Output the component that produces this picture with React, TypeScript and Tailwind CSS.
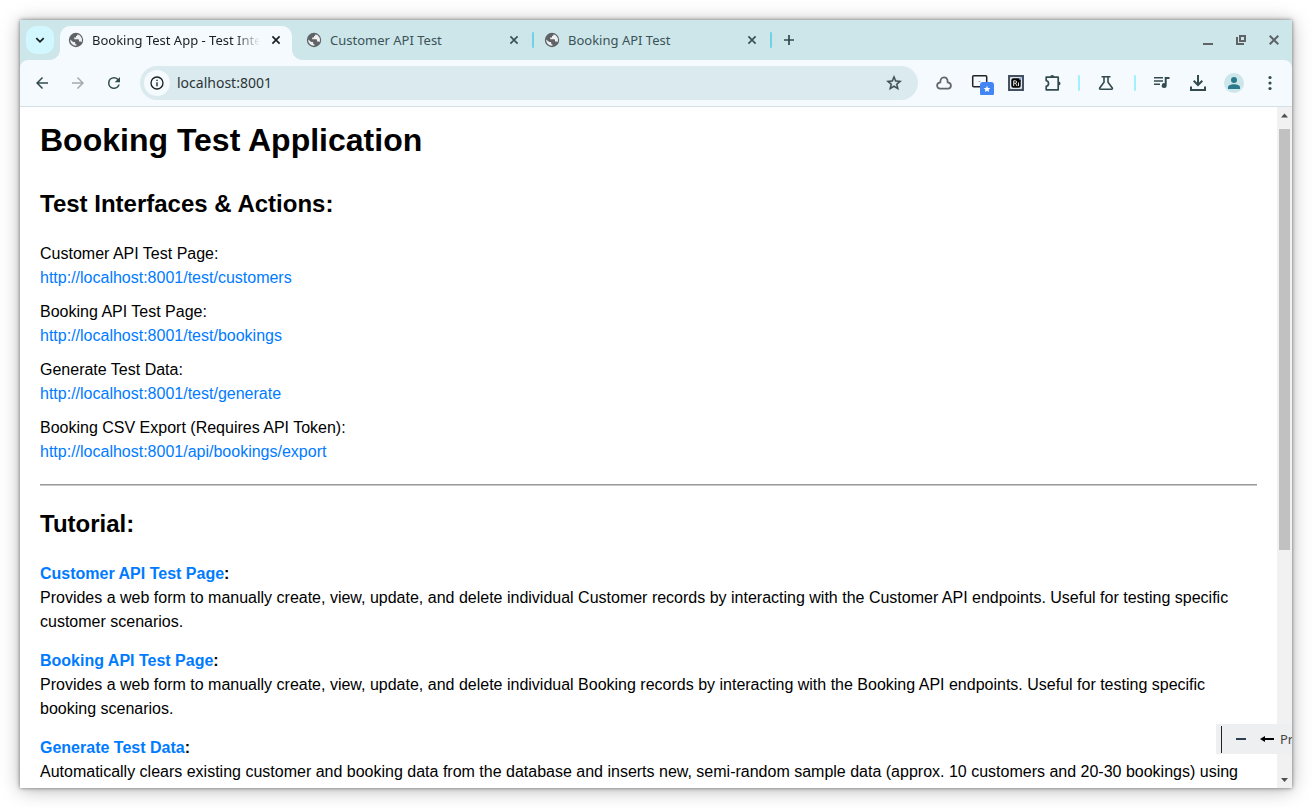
import type { ReactNode } from "react";

function Icon({ size = 20, box = "0 0 24 24", children }: { size?: number; box?: string; children: ReactNode }) {
  return (
    <svg width={size} height={size} viewBox={box} fill="currentColor" aria-hidden="true" className="shrink-0">
      {children}
    </svg>
  );
}

function Globe() {
  return (
    <svg width="16" height="16" viewBox="0 0 16 16" aria-hidden="true" className="shrink-0">
      <circle cx="8" cy="8" r="7.2" fill="#5f6368" />
      <path
        d="M9.3 2.2c.4 1-.2 1.8-1.3 1.9v1.5H6.2v1.7h3.6c.8 0 1.2.5 1.2 1.2v1h1.4c.5 0 .9.3 1.1.7A5.8 5.8 0 0 0 9.3 2.2ZM2.2 7.4A5.8 5.8 0 0 0 8.4 13.8v-1.6c-.8 0-1.3-.5-1.3-1.3v-.8H5.2L2.2 7.4Z"
        fill="#fff"
        fillOpacity=".9"
      />
    </svg>
  );
}

function CloseGlyph() {
  return (
    <svg width="10" height="10" viewBox="0 0 10 10" stroke="currentColor" strokeWidth="1.7" aria-hidden="true">
      <path d="M1.400 1.400l7.200 7.200M8.600 1.400L1.400 8.600" />
    </svg>
  );
}

function Tab({ title, active = false }: { title: string; active?: boolean }) {
  return (
    <div
      className={
        active
          ? "relative flex w-58 items-center rounded-t-[10px] bg-[#f4fafd] pr-2 pl-2 text-[#1b1f20]"
          : "flex w-58 items-center pr-2 pl-2 text-[#3b5357]"
      }
    >
      {active && (
        <>
          <span className="absolute bottom-0 -left-2.5 size-2.5 bg-[radial-gradient(circle_at_0_0,transparent_9.5px,#f4fafd_10px)]" />
          <span className="absolute -right-2.5 bottom-0 size-2.5 bg-[radial-gradient(circle_at_100%_0,transparent_9.5px,#f4fafd_10px)]" />
        </>
      )}
      <button type="button" className="flex min-w-0 flex-1 items-center gap-2 pb-1.5">
        <Globe />
        <span
          className={
            active
              ? "flex-1 overflow-hidden mask-r-from-85% text-left text-[13px] leading-5 whitespace-nowrap"
              : "flex-1 overflow-hidden text-left text-[13px] leading-5 whitespace-nowrap"
          }
        >
          {title}
        </span>
      </button>
      <button type="button" aria-label={"Close " + title} className="mb-1.5 ml-2 flex size-4 items-center justify-center">
        <CloseGlyph />
      </button>
    </div>
  );
}

function TabStrip() {
  return (
    <div className="flex h-10 shrink-0 items-stretch bg-[#cde6ea] pt-1.5 pr-2">
      <button
        type="button"
        aria-label="Search tabs"
        className="mr-1.5 ml-1.5 flex size-7 items-center justify-center rounded-[10px] bg-[#d2f7ff] text-[#1b1f20]"
      >
        <svg width="10" height="10" viewBox="0 0 10 10" fill="none" stroke="currentColor" strokeWidth="1.8">
          <path d="M1.300 3.200L5 6.800l3.700-3.600" />
        </svg>
      </button>
      <Tab title="Booking Test App - Test Interface" active />
      <div className="w-1.5" />
      <Tab title="Customer API Test" />
      <div className="mx-0.5 mt-1.5 h-4 w-0.5 rounded-full bg-[#6fd3e6]" />
      <Tab title="Booking API Test" />
      <div className="mx-0.5 mt-1.5 h-4 w-0.5 rounded-full bg-[#6fd3e6]" />
      <button type="button" aria-label="New tab" className="flex size-7 items-center justify-center pl-0.5 text-[#33494d]">
        <svg width="10" height="10" viewBox="0 0 10 10" stroke="currentColor" strokeWidth="1.700">
          <path d="M5 0v10M0 5h10" />
        </svg>
      </button>
      <div className="ml-auto flex h-7 items-center gap-[13px] text-[#5f6368]">
        <button type="button" aria-label="Minimize" className="flex size-5 items-center justify-center">
          <svg width="10" height="10" viewBox="0 0 10 10">
            <path d="M0 8h10v2H0z" fill="currentColor" />
          </svg>
        </button>
        <button type="button" aria-label="Restore" className="flex size-5 items-center justify-center">
          <svg width="10" height="10" viewBox="0 0 10 10" fill="none" stroke="currentColor" strokeWidth="2">
            <path d="M4 1h5v5H4zM1 2v7h7" />
          </svg>
        </button>
        <button type="button" aria-label="Close window" className="flex size-5 items-center justify-center">
          <svg width="10" height="10" viewBox="0 0 10 10" stroke="currentColor" strokeWidth="2">
            <path d="M.7.7l8.600 8.600M9.300.7L.7 9.300" />
          </svg>
        </button>
      </div>
    </div>
  );
}

function ToolButton({ label, children, muted = false }: { label: string; children: ReactNode; muted?: boolean }) {
  return (
    <button
      type="button"
      aria-label={label}
      className={
        muted
          ? "flex size-9 shrink-0 items-center justify-center text-[#a3abad]"
          : "flex size-9 shrink-0 items-center justify-center text-[#334b4f]"
      }
    >
      {children}
    </button>
  );
}

function Toolbar() {
  return (
    <div className="flex shrink-0 bg-[#cde6ea]">
      <div className="flex h-[47px] flex-1 items-center rounded-t-lg border-b border-[#d3e1e5] bg-[#f4fafd] pr-1 pl-1">
        <ToolButton label="Back">
          <Icon size={18}>
            <path d="M20 11H7.830l5.590-5.590L12 4l-8 8 8 8 1.410-1.410L7.830 13H20v-2z" />
          </Icon>
        </ToolButton>
        <ToolButton label="Forward" muted>
          <Icon size={18}>
            <path d="M4 11h12.170l-5.590-5.590L12 4l8 8-8 8-1.410-1.410L16.170 13H4v-2z" />
          </Icon>
        </ToolButton>
        <ToolButton label="Reload">
          <Icon size={18}>
            <path d="M17.650 6.350A7.960 7.960 0 0 0 12 4a8 8 0 1 0 7.730 10h-2.080A6 6 0 1 1 12 6c1.660 0 3.140.69 4.220 1.780L13 11h7V4l-2.350 2.350z" />
          </Icon>
        </ToolButton>
        <div className="ml-2 flex h-[34px] min-w-0 flex-1 items-center rounded-full bg-[#dbeaee] pr-[15px] pl-1">
          <button
            type="button"
            aria-label="Site information"
            className="flex size-[26px] shrink-0 items-center justify-center rounded-full bg-[#f4fafd] text-[#1b1f20]"
          >
            <Icon size={16}>
              <path d="M11 17h2v-6h-2v6zm1-15a10 10 0 1 0 0 20 10 10 0 0 0 0-20zm0 18a8 8 0 1 1 0-16 8 8 0 0 1 0 16zM11 9h2V7h-2v2z" />
            </Icon>
          </button>
          <input
            aria-label="Address"
            defaultValue="localhost:8001"
            className="ml-[7px] min-w-0 flex-1 bg-transparent text-sm text-[#2b3537] outline-none"
          />
          <button type="button" aria-label="Bookmark this page" className="text-[#3c4a4d]">
            <Icon size={18}>
              <path
                stroke="currentColor"
                strokeWidth=".5"
                d="M22 9.240l-7.190-.62L12 2 9.190 8.630 2 9.240l5.460 4.730L5.820 21 12 17.270 18.180 21l-1.630-7.030L22 9.240zM12 15.400l-3.760 2.270 1-4.280-3.320-2.880 4.380-.38L12 6.100l1.710 4.040 4.380.38-3.320 2.880 1 4.280L12 15.400z"
              />
            </Icon>
          </button>
        </div>
        <div className="ml-2 flex">
          <ToolButton label="Cloud extension">
            <svg width="16" height="14" viewBox="0 0 16 14" fill="none" stroke="#666" strokeWidth="1.800">
              <path d="M4.300 6.400C4.300 3.200 5.600 1.400 8 1.400s3.700 1.800 3.700 5c2 .3 3.200 1.500 3.200 3.100 0 1.900-1.300 3.100-3.100 3.100H4.200c-1.800 0-3.100-1.200-3.100-3.100 0-1.600 1.200-2.800 3.200-3.100Z" />
            </svg>
          </ToolButton>
          <ToolButton label="Capture extension">
            <svg width="24" height="24" viewBox="0 0 24 24" className="ml-1">
              <rect x="2.700" y="4.800" width="14" height="11" rx="1" fill="none" stroke="#222" strokeWidth="1.500" />
              <path d="M8.500 10.500h2" stroke="#aaa" />
              <rect x="10" y="11" width="14" height="14" rx="3" fill="#4285f4" />
              <path d="M17 14.700l.95 2.200 2.400.2-1.800 1.600.55 2.300-2.100-1.200-2.100 1.200.55-2.300-1.800-1.600 2.400-.2z" fill="#fff" />
            </svg>
          </ToolButton>
          <ToolButton label="Ri extension">
            <svg width="16" height="16" viewBox="0 0 16 16">
              <path d="M0 0h16v16H0z" fill="#465261" />
              <rect x="2" y="2" width="12" height="12" rx="1" fill="#dfe5ea" />
              <rect x="3.300" y="3.300" width="9.400" height="9.400" rx="2" fill="#050505" />
              <path d="M5.700 11V5.800h1.700c1.700 0 1.700 2.400 0 2.400H6M7.500 8.200L9 11M10.500 7.500V11" fill="none" stroke="#fff" strokeWidth=".9" />
              <path d="M11.500 4.500l2-2" stroke="#7fb4f5" strokeWidth="1.200" />
            </svg>
          </ToolButton>
          <ToolButton label="Extensions">
            <svg width="18" height="18" viewBox="0 0 18 18" className="ml-0.5">
              <path
                d="M2.200 3.200H14.200V15.800H2.200V12.300C5.300 11.800 5.300 7.200 2.200 6.700Z"
                fill="none"
                stroke="currentColor"
                strokeWidth="1.700"
                strokeLinejoin="round"
              />
              <path d="M6.200 3a2 2 0 0 1 4 0zM14.500 7.500a2 2 0 0 1 0 4z" fill="currentColor" />
            </svg>
          </ToolButton>
          <div className="mx-2 my-auto h-4 w-0.5 rounded-full bg-[#a1efff]" />
          <ToolButton label="Labs">
            <svg width="16" height="16" viewBox="0 0 16 16" fill="none" stroke="currentColor" strokeWidth="1.600">
              <path d="M3.500 1.800h9M6 2v5.200L1.700 13c-.3.600 0 1.200.7 1.200h11.200c.7 0 1-.6.7-1.200L10 7.200V2" />
            </svg>
          </ToolButton>
          <div className="mr-2 ml-2.5 my-auto h-4 w-0.5 rounded-full bg-[#a1efff]" />
        </div>
        <ToolButton label="Media controls">
          <svg width="16" height="16" viewBox="0 0 16 16" fill="currentColor">
            <path d="M0 2h9v1.600H0zM0 5.200h9v1.600H0zM0 8.400h6V10H0zM10.700 2H15.500v1.900h-2.800v6.700a2.500 2.500 0 1 1-2-2.450z" />
          </svg>
        </ToolButton>
        <ToolButton label="Downloads">
          <svg width="16" height="16" viewBox="0 0 16 16" fill="none" stroke="currentColor" strokeWidth="2">
            <path d="M8 0v9.500M3.700 5.700L8 10l4.300-4.300M1 11.500V15h14v-3.500" />
          </svg>
        </ToolButton>
        <ToolButton label="Profile">
          <svg width="20" height="20" viewBox="0 0 20 20">
            <circle cx="10" cy="10" r="10" fill="#cde6ea" />
            <circle cx="10" cy="7" r="3" fill="#2b7a8c" />
            <path d="M4 16v-1.700C4 12.300 7 11.300 10 11.300s6 1 6 3V16z" fill="#2b7a8c" />
          </svg>
        </ToolButton>
        <ToolButton label="Menu">
          <svg width="4" height="16" viewBox="0 0 4 16" fill="currentColor">
            <circle cx="2" cy="2.500" r="1.600" />
            <circle cx="2" cy="8" r="1.600" />
            <circle cx="2" cy="13.500" r="1.600" />
          </svg>
        </ToolButton>
      </div>
    </div>
  );
}

const links = [
  { label: "Customer API Test Page:", url: "http://localhost:8001/test/customers" },
  { label: "Booking API Test Page:", url: "http://localhost:8001/test/bookings" },
  { label: "Generate Test Data:", url: "http://localhost:8001/test/generate" },
  { label: "Booking CSV Export (Requires API Token):", url: "http://localhost:8001/api/bookings/export" },
];

const tutorials = [
  {
    title: "Customer API Test Page",
    url: links[0].url,
    text: "Provides a web form to manually create, view, update, and delete individual Customer records by interacting with the Customer API endpoints. Useful for testing specific customer scenarios.",
  },
  {
    title: "Booking API Test Page",
    url: links[1].url,
    text: "Provides a web form to manually create, view, update, and delete individual Booking records by interacting with the Booking API endpoints. Useful for testing specific booking scenarios.",
  },
  {
    title: "Generate Test Data",
    url: links[2].url,
    text: "Automatically clears existing customer and booking data from the database and inserts new, semi-random sample data (approx. 10 customers and 20-30 bookings) using",
  },
];

function Page() {
  return (
    <main className="min-w-0 flex-1 overflow-hidden px-5 pt-[9px] font-['Liberation_Sans',Arial,sans-serif] text-base leading-6 text-black">
      <h1 className="text-[32px] leading-[48px] font-bold">Booking Test Application</h1>
      <h2 className="mt-[22px] mb-5 text-2xl leading-9 font-bold">Test Interfaces &amp; Actions:</h2>
      <ul className="flex flex-col gap-2.5">
        {links.map((l) => (
          <li key={l.url}>
            {l.label}
            <br />
            <a href={l.url} className="text-[#007bff]">
              {l.url}
            </a>
          </li>
        ))}
      </ul>
      <hr className="my-5 border-t border-b border-t-[#9a9a9a] border-b-[#c8c8c8]" />
      <h2 className="mb-5 text-2xl leading-9 font-bold">Tutorial:</h2>
      <ul className="flex flex-col gap-[15px]">
        {tutorials.map((t) => (
          <li key={t.title}>
            <strong>
              <a href={t.url} className="text-[#007bff]">
                {t.title}
              </a>
              :
            </strong>
            <br />
            {t.text}
          </li>
        ))}
      </ul>
    </main>
  );
}

function ScrollBar() {
  return (
    <div className="flex w-[15px] shrink-0 flex-col items-center bg-[#f1f1f1]">
      <svg width="15" height="22" viewBox="0 0 15 22" className="shrink-0">
        <path d="M4 10.500L7.500 6.500l3.500 4z" fill="#505050" />
      </svg>
      <div className="w-[11px] flex-421 bg-[#c1c1c1]" />
      <div className="flex-222" />
      <svg width="15" height="16" viewBox="0 0 15 16" className="shrink-0">
        <path d="M4 6l3.500 4L11 6z" fill="#505050" />
      </svg>
    </div>
  );
}

export default function App() {
  return (
    <div className="h-screen bg-white p-5 font-['Noto_Sans',sans-serif]">
      <div className="relative flex h-full flex-col overflow-hidden bg-white shadow-[0_0_4px_rgba(0,0,0,0.5),0_2px_18px_rgba(0,0,0,0.28)]">
        <TabStrip />
        <Toolbar />
        <div className="flex min-h-0 flex-1">
          <Page />
          <ScrollBar />
        </div>
        <div className="absolute right-0 bottom-[34px] flex h-[30px] w-19 items-center overflow-hidden bg-[#eeeff1] pl-[5px] text-[#444]">
          <span className="h-[27px] w-px shrink-0 bg-[#222]" />
          <svg width="38" height="14" viewBox="0 0 38 14" className="ml-3.5 shrink-0">
            <path d="M0 6h10v2H0z" fill="#2c3e50" />
            <path d="M24 7l5-3v2h9v2h-9v2z" fill="#000" />
          </svg>
          <span className="ml-1.5 text-[13px] leading-5 whitespace-nowrap">Prev</span>
        </div>
      </div>
    </div>
  );
}
